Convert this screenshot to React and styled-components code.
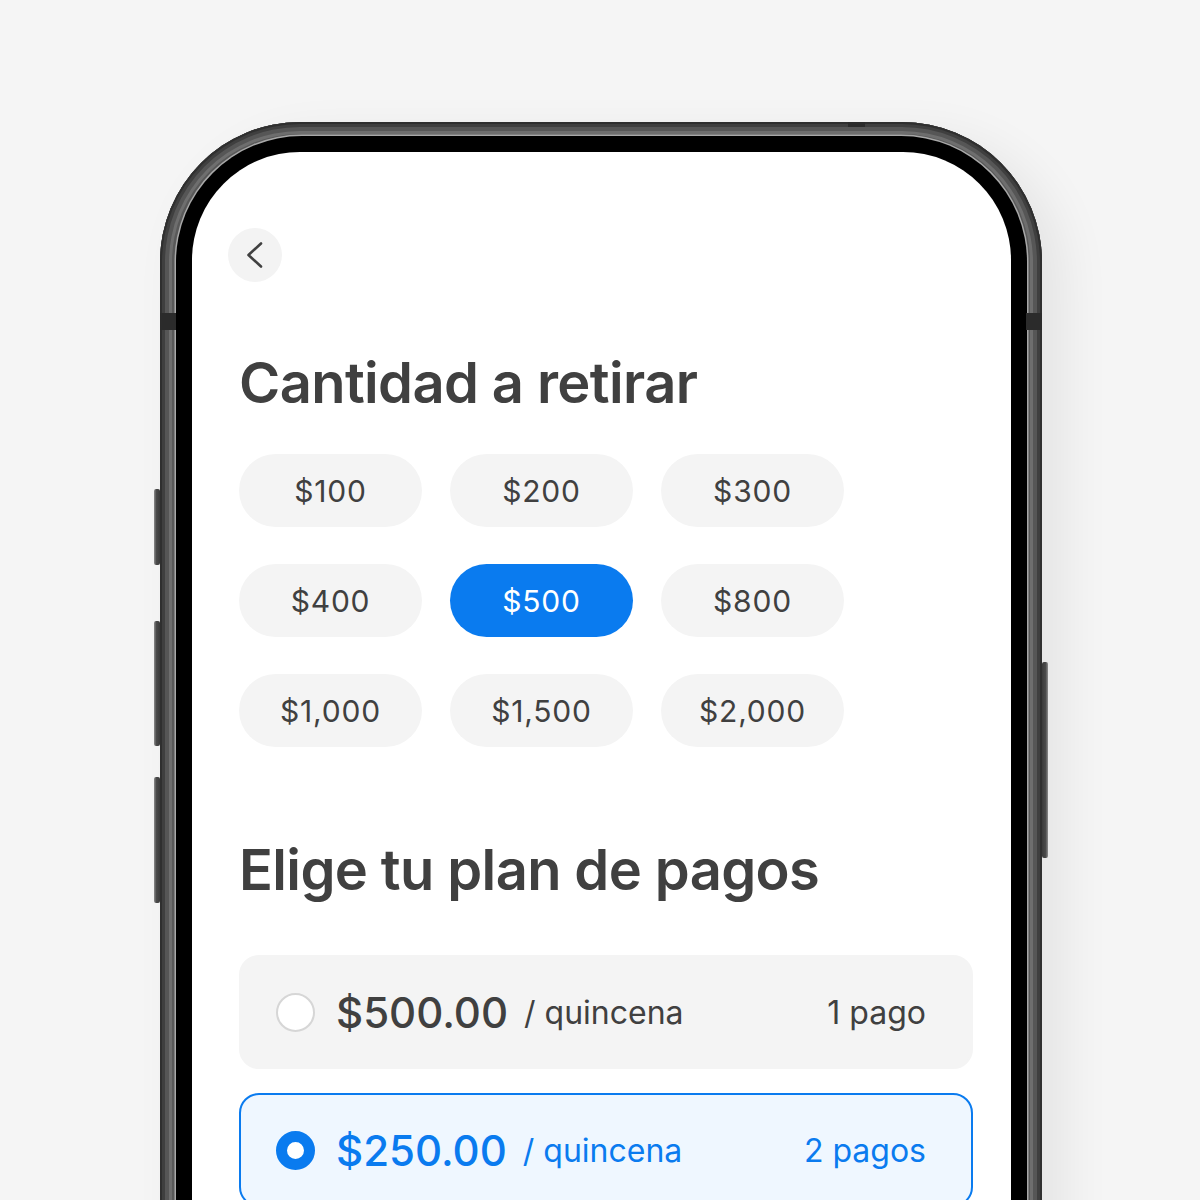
import { useState } from "react";
import styled, { createGlobalStyle } from "styled-components";

const BLUE = "#0a7bef";
const INK = "#404040";

const GlobalStyle = createGlobalStyle`
  html, body {
    margin: 0;
    padding: 0;
    background: #f5f5f5;
    font-family: Inter, "Noto Sans", sans-serif;
  }
`;

const Page = styled.div`
  width: 1200px;
  height: 1200px;
  overflow: hidden;
  padding: 122px 0 0 160px;
  box-sizing: border-box;
`;

const Phone = styled.div`
  position: relative;
  width: 882px;
  height: 1300px;
  box-sizing: border-box;
  padding: 14px 15px 0 16px;
  border-radius: 140px;
  background: #595959;
  box-shadow:
    inset 0 0 0 2px #2f2f2f,
    inset 0 0 0 5px #3f3f3f,
    inset 0 0 0 9px #565656,
    inset 0 0 0 12px #6e6e6e,
    22px 16px 50px rgba(0, 0, 0, 0.07);
`;

const Bezel = styled.div`
  height: 100%;
  box-sizing: border-box;
  padding: 16px 16px 0 16px;
  border-radius: 126px;
  background: #000;
  box-shadow: 0 0 0 1.5px #a8a8a8;
`;

const Screen = styled.div`
  height: 100%;
  box-sizing: border-box;
  padding: 76px 38px 0 47px;
  border-radius: 108px;
  background: #fff;
  overflow: hidden;
`;

const SideKey = styled.div`
  position: absolute;
  top: ${(p) => p.$top}px;
  ${(p) => (p.$right ? "right: -6px;" : "left: -6px;")}
  width: 6px;
  height: ${(p) => p.$h}px;
  border-radius: 2px;
  background: linear-gradient(
    ${(p) => (p.$right ? "270deg" : "90deg")},
    #8c8c8c 0%,
    #4a4a4a 40%,
    #3a3a3a 100%
  );
`;

const AntennaBand = styled.div`
  position: absolute;
  background: #2b2b2b;
  ${(p) => p.$pos}
`;

const BackButton = styled.button`
  width: 54px;
  height: 54px;
  margin-left: -11px;
  border: 0;
  border-radius: 50%;
  background: #f3f3f3;
  display: flex;
  align-items: center;
  justify-content: center;
  padding: 0;
  cursor: pointer;
`;

const Title = styled.h1`
  margin: ${(p) => p.$mt}px 0 0;
  font-size: 56px;
  line-height: 67px;
  font-weight: 600;
  letter-spacing: -0.6px;
  color: ${INK};
`;

const ChipGrid = styled.div`
  display: grid;
  grid-template-columns: repeat(3, 183px);
  column-gap: 28px;
  row-gap: 37px;
  margin-top: 37px;
`;

const Chip = styled.button`
  height: 73px;
  border: 0;
  border-radius: 37px;
  font-family: inherit;
  font-size: 30px;
  font-weight: 400;
  letter-spacing: 0.8px;
  background: ${(p) => (p.$active ? BLUE : "#f4f4f4")};
  color: ${(p) => (p.$active ? "#fff" : INK)};
  cursor: pointer;
`;

const Plans = styled.div`
  display: flex;
  flex-direction: column;
  gap: 24px;
  margin-top: 51px;
`;

const PlanCard = styled.label`
  display: flex;
  align-items: center;
  height: 114px;
  box-sizing: border-box;
  padding: 0 45px 0 35px;
  border-radius: 20px;
  border: 2px solid ${(p) => (p.$active ? BLUE : "#f4f4f4")};
  background: ${(p) => (p.$active ? "#eff7ff" : "#f4f4f4")};
  color: ${(p) => (p.$active ? BLUE : INK)};
  cursor: pointer;
`;

const Radio = styled.span`
  width: 39px;
  height: 39px;
  box-sizing: border-box;
  border-radius: 50%;
  flex-shrink: 0;
  background: #fff;
  border: ${(p) => (p.$active ? `11px solid ${BLUE}` : "2px solid #d6d6d6")};
`;

const Amount = styled.span`
  margin-left: 21px;
  font-size: 42px;
  font-weight: 500;
`;

const Period = styled.span`
  margin-left: 16px;
  font-size: 32px;
  font-weight: 400;
`;

const Count = styled.span`
  margin-left: auto;
  font-size: 32px;
  font-weight: 400;
`;

const amounts = ["$100", "$200", "$300", "$400", "$500", "$800", "$1,000", "$1,500", "$2,000"];

const plans = [
  { amount: "$500.00", count: "1 pago" },
  { amount: "$250.00", count: "2 pagos" },
];

export default function App() {
  const [amount, setAmount] = useState("$500");
  const [plan, setPlan] = useState(1);

  return (
    <>
      <GlobalStyle />
      <Page>
        <Phone>
          <SideKey $top={367} $h={76} />
          <SideKey $top={499} $h={125} />
          <SideKey $top={655} $h={126} />
          <SideKey $right $top={540} $h={196} />
          <AntennaBand $pos="left: 688px; top: 0; width: 17px; height: 5px;" />
          <AntennaBand $pos="left: 0; top: 191px; width: 16px; height: 17px;" />
          <AntennaBand $pos="right: 0; top: 191px; width: 16px; height: 17px;" />
          <Bezel>
            <Screen>
              <BackButton aria-label="Volver">
                <svg width="26" height="26" viewBox="0 0 26 26" fill="none">
                  <path
                    d="M19 1.5 6.5 13 19 24.5"
                    stroke={INK}
                    strokeWidth="2.6"
                    strokeLinecap="round"
                    strokeLinejoin="round"
                  />
                </svg>
              </BackButton>

              <Title $mt={68}>Cantidad a retirar</Title>
              <ChipGrid>
                {amounts.map((a) => (
                  <Chip key={a} $active={a === amount} onClick={() => setAmount(a)}>
                    {a}
                  </Chip>
                ))}
              </ChipGrid>

              <Title $mt={90}>Elige tu plan de pagos</Title>
              <Plans>
                {plans.map((p, i) => (
                  <PlanCard key={p.amount} $active={i === plan} onClick={() => setPlan(i)}>
                    <Radio $active={i === plan} />
                    <Amount>{p.amount}</Amount>
                    <Period>/ quincena</Period>
                    <Count>{p.count}</Count>
                  </PlanCard>
                ))}
              </Plans>
            </Screen>
          </Bezel>
        </Phone>
      </Page>
    </>
  );
}
